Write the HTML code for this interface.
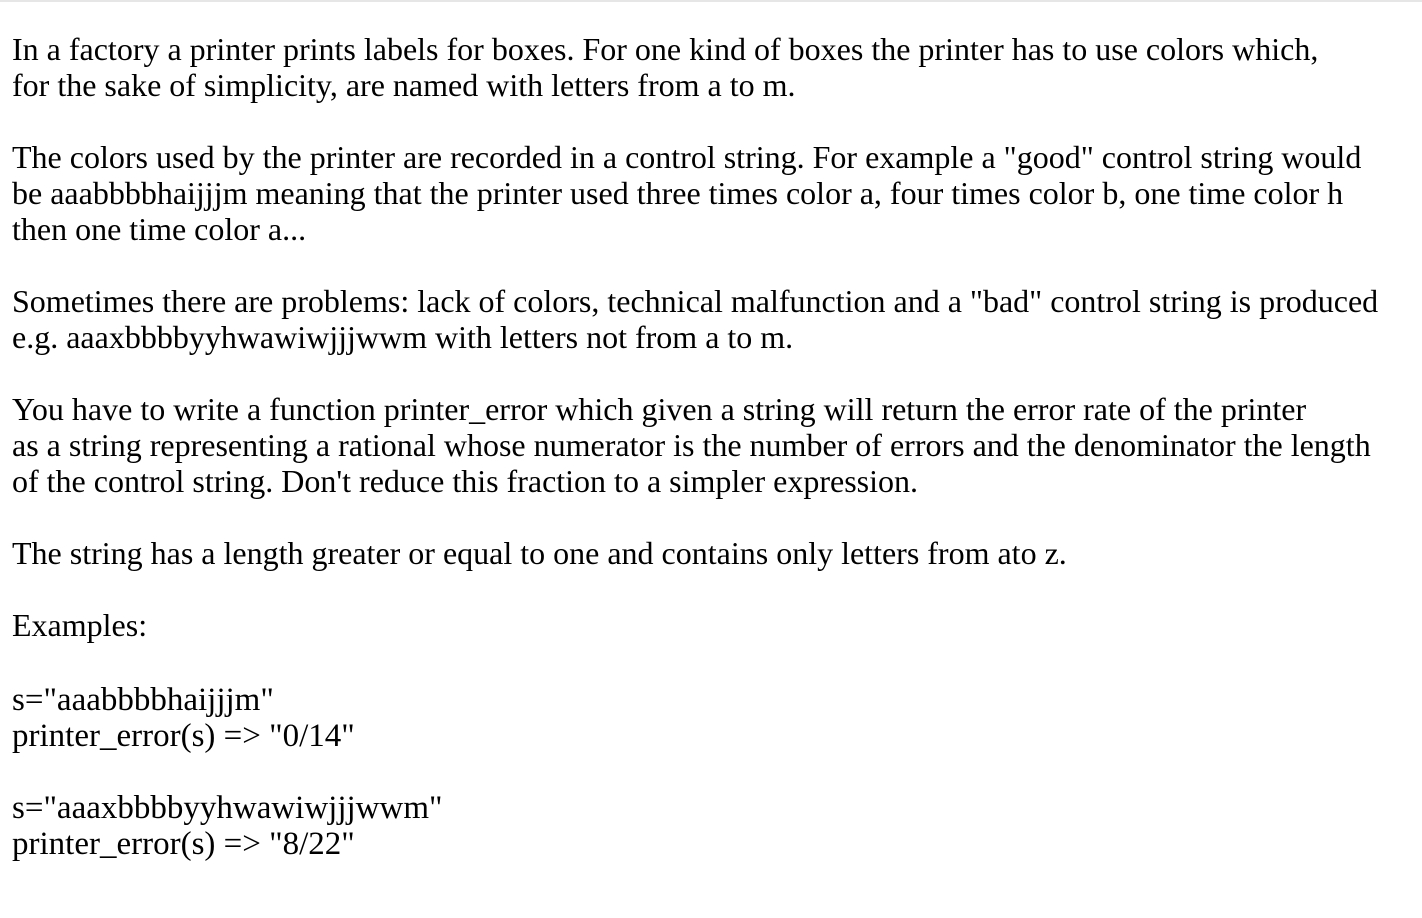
<!DOCTYPE html>
<html><head><meta charset="utf-8"><style>
html,body{margin:0;padding:0;background:#fff;}
body{width:1422px;height:918px;overflow:hidden;border-top:2px solid #e6e6e6;box-sizing:border-box;}
.t{font-family:"Liberation Serif",serif;font-size:32px;line-height:36px;color:#000;white-space:pre;margin:0;padding:29px 0 0 12px;}
.e{font-size:33px;line-height:36px;white-space:pre;position:relative;top:3px;}
</style></head><body>
<div class="t">In a factory a printer prints labels for boxes. For one kind of boxes the printer has to use colors which,
for the sake of simplicity, are named with letters from a to m.

The colors used by the printer are recorded in a control string. For example a "good" control string would
be aaabbbbhaijjjm meaning that the printer used three times color a, four times color b, one time color h
then one time color a...

Sometimes there are problems: lack of colors, technical malfunction and a "bad" control string is produced
e.g. aaaxbbbbyyhwawiwjjjwwm with letters not from a to m.

You have to write a function printer_error which given a string will return the error rate of the printer
as a string representing a rational whose numerator is the number of errors and the denominator the length
of the control string. Don't reduce this fraction to a simpler expression.

The string has a length greater or equal to one and contains only letters from ato z.

Examples:

<div class="e">s="aaabbbbhaijjjm"
printer_error(s) =&gt; "0/14"

s="aaaxbbbbyyhwawiwjjjwwm"
printer_error(s) =&gt; "8/22"</div></div>
</body></html>
